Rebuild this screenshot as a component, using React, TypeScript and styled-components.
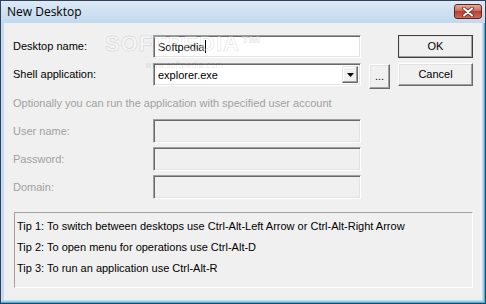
import React from 'react';
import styled, { createGlobalStyle } from 'styled-components';

const Global = createGlobalStyle`
  html, body { margin: 0; padding: 0; background: #ffffff; }
  * { box-sizing: border-box; }
`;

const Window = styled.div`
  position: relative;
  width: 486px;
  height: 304px;
  border: 1px solid #2f4257;
  background: #c6dbf0;
  box-shadow: inset -1px -1px #35b9ea, inset -2px -2px #8fd3f0;
  display: flex;
  flex-direction: column;
  font-family: "Liberation Sans", Arial, sans-serif;
  font-size: 11px;
  color: #000;
`;

const TitleBar = styled.div`
  height: 22px;
  padding: 0 3px 0 6px;
  display: flex;
  align-items: flex-start;
  justify-content: space-between;
  background: linear-gradient(#dde9f6, #c3d8ee);
`;

const Title = styled.span`
  font-family: "Open Sans", "Noto Sans", sans-serif;
  font-size: 12px;
  line-height: 22px;
  color: #000;
`;

const CloseButton = styled.div`
  width: 28px;
  height: 15px;
  margin-top: 3px;
  border: 1px solid #5e2621;
  border-radius: 3px;
  background: linear-gradient(#e8a89c, #cd6e60 45%, #b8402f 50%, #cf6a58);
  display: flex;
  align-items: center;
  justify-content: center;
`;

const Client = styled.div`
  flex: 1;
  margin: 0 3px 3px 3px;
  background: #f0f0f0;
  padding: 12px 0 0 9px;
  display: flex;
  flex-direction: column;
`;

const TopGrid = styled.div`
  display: grid;
  grid-template-columns: 132px 208px 21px 75px;
  grid-template-rows: 23px 23px;
  column-gap: 8px;
  row-gap: 5px;
  align-items: center;
`;

const Label = styled.span<{ $disabled?: boolean }>`
  color: ${(p) => (p.$disabled ? '#a0a0a0' : '#000')};
  line-height: 13px;
`;

const Field = styled.div<{ $disabled?: boolean }>`
  height: ${(p) => (p.$disabled ? '24px' : '23px')};
  border: 1px solid;
  border-color: #a0a0a0 #ffffff #ffffff #a0a0a0;
  box-shadow: inset 1px 1px #696969, inset -1px -1px #e3e3e3;
  background: ${(p) => (p.$disabled ? '#f0f0f0' : '#ffffff')};
  display: flex;
  align-items: center;
  padding: 0 3px 0 4px;
  position: relative;
`;

const Caret = styled.span`
  display: inline-block;
  width: 1px;
  height: 13px;
  background: #000;
  margin-left: 1px;
`;

const DropButton = styled.div`
  position: absolute;
  right: 2px;
  top: 2px;
  bottom: 2px;
  width: 16px;
  border: 1px solid;
  border-color: #e3e3e3 #696969 #696969 #e3e3e3;
  box-shadow: inset -1px -1px #a0a0a0, inset 1px 1px #ffffff;
  background: #f0f0f0;
  display: flex;
  align-items: center;
  justify-content: center;
`;

const Button = styled.div<{ $tall?: boolean }>`
  height: ${(p) => (p.$tall ? '25px' : '23px')};
  align-self: start;
  margin-top: ${(p) => (p.$tall ? '1px' : '0')};
  border: 1px solid;
  border-color: #ffffff #696969 #696969 #ffffff;
  box-shadow: inset -1px -1px #a0a0a0, inset 1px 1px #e3e3e3;
  background: #f0f0f0;
  display: flex;
  align-items: center;
  justify-content: center;
  line-height: 13px;
`;

const DefaultButton = styled(Button)`
  outline: 1px solid #404040;
  outline-offset: -1px;
  border-color: #ffffff #404040 #404040 #ffffff;
`;

const Hint = styled.div`
  margin-top: 11px;
  color: #a0a0a0;
  line-height: 13px;
`;

const AccountGrid = styled.div`
  margin-top: 9px;
  display: grid;
  grid-template-columns: 140px 208px;
  grid-auto-rows: 24px;
  row-gap: 4px;
  align-items: center;
`;

const TipBox = styled.div`
  margin: 13px 0 0 1px;
  width: 459px;
  height: 76px;
  border: 1px solid;
  border-color: #a0a0a0 #ffffff #ffffff #a0a0a0;
  padding: 7px 0 0 2px;
  display: flex;
  flex-direction: column;
  gap: 8px;
`;

const Tip = styled.div`
  line-height: 13px;
  white-space: nowrap;
`;

const Watermark = styled.div`
  position: absolute;
  left: 104px;
  top: 31px;
  display: flex;
  flex-direction: column;
  align-items: center;
  pointer-events: none;
`;

const WatermarkLogo = styled.span`
  font-family: "Liberation Sans", sans-serif;
  font-weight: bold;
  font-size: 22px;
  letter-spacing: 1px;
  color: rgba(255, 255, 255, 0.35);
  -webkit-text-stroke: 1px rgba(0, 0, 0, 0.1);
  line-height: 24px;
`;

const WatermarkUrl = styled.span`
  font-family: "DejaVu Sans", sans-serif;
  font-size: 8px;
  color: rgba(0, 0, 0, 0.12);
  margin-top: 5px;
`;

const CloseIcon = () => (
  <svg width="14" height="10" viewBox="0 0 14 10">
    <path d="M3 1.5 L11 8.5 M11 1.5 L3 8.5" stroke="#4a1e1a" strokeWidth="3.6" strokeLinecap="round" />
    <path d="M3 1.5 L11 8.5 M11 1.5 L3 8.5" stroke="#ffffff" strokeWidth="2.2" strokeLinecap="round" />
  </svg>
);

const DownArrow = () => (
  <svg width="7" height="4" viewBox="0 0 7 4">
    <path d="M0 0 H7 L3.5 4 Z" fill="#000" />
  </svg>
);

export default function App() {
  return (
    <>
      <Global />
      <Window>
        <TitleBar>
          <Title>New Desktop</Title>
          <CloseButton>
            <CloseIcon />
          </CloseButton>
        </TitleBar>
        <Client>
          <TopGrid>
            <Label>Desktop name:</Label>
            <Field>
              Softpedia
              <Caret />
            </Field>
            <span />
            <DefaultButton>OK</DefaultButton>
            <Label>Shell application:</Label>
            <Field>
              explorer.exe
              <DropButton>
                <DownArrow />
              </DropButton>
            </Field>
            <Button $tall>...</Button>
            <Button>Cancel</Button>
          </TopGrid>
          <Hint>Optionally you can run the application with specified user account</Hint>
          <AccountGrid>
            <Label $disabled>User name:</Label>
            <Field $disabled />
            <Label $disabled>Password:</Label>
            <Field $disabled />
            <Label $disabled>Domain:</Label>
            <Field $disabled />
          </AccountGrid>
          <TipBox>
            <Tip>Tip 1: To switch between desktops use Ctrl-Alt-Left Arrow or Ctrl-Alt-Right Arrow</Tip>
            <Tip>Tip 2: To open menu for operations use Ctrl-Alt-D</Tip>
            <Tip>Tip 3: To run an application use Ctrl-Alt-R</Tip>
          </TipBox>
        </Client>
        <Watermark>
          <WatermarkLogo>SOFTPEDIA™</WatermarkLogo>
          <WatermarkUrl>www.softpedia.com</WatermarkUrl>
        </Watermark>
      </Window>
    </>
  );
}
